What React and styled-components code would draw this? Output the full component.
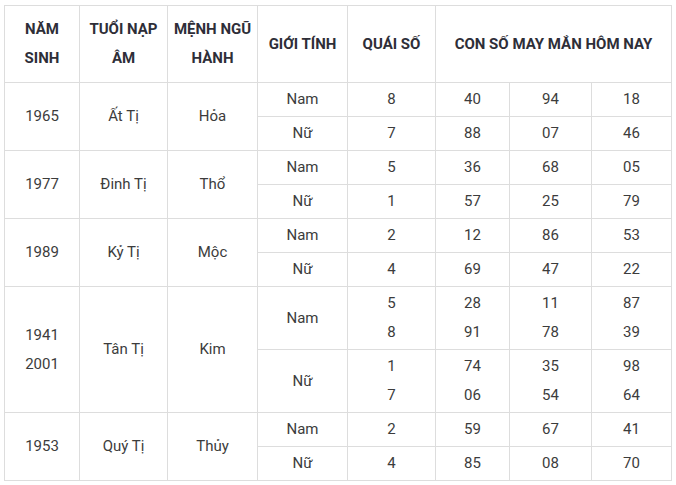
import React from 'react';
import styled, { createGlobalStyle } from 'styled-components';

const GlobalStyle = createGlobalStyle`
  html, body {
    margin: 0;
    padding: 0;
    background: #fff;
  }
  body {
    font-family: Roboto, "Liberation Sans", Arial, sans-serif;
  }
`;

const rows = [
  {
    year: ['1965'], tuoi: 'Ất Tị', menh: 'Hỏa',
    genders: [
      { label: 'Nam', quai: ['8'], nums: [['40'], ['94'], ['18']] },
      { label: 'Nữ', quai: ['7'], nums: [['88'], ['07'], ['46']] },
    ],
  },
  {
    year: ['1977'], tuoi: 'Đinh Tị', menh: 'Thổ',
    genders: [
      { label: 'Nam', quai: ['5'], nums: [['36'], ['68'], ['05']] },
      { label: 'Nữ', quai: ['1'], nums: [['57'], ['25'], ['79']] },
    ],
  },
  {
    year: ['1989'], tuoi: 'Kỷ Tị', menh: 'Mộc',
    genders: [
      { label: 'Nam', quai: ['2'], nums: [['12'], ['86'], ['53']] },
      { label: 'Nữ', quai: ['4'], nums: [['69'], ['47'], ['22']] },
    ],
  },
  {
    year: ['1941', '2001'], tuoi: 'Tân Tị', menh: 'Kim',
    genders: [
      { label: 'Nam', quai: ['5', '8'], nums: [['28', '91'], ['11', '78'], ['87', '39']] },
      { label: 'Nữ', quai: ['1', '7'], nums: [['74', '06'], ['35', '54'], ['98', '64']] },
    ],
  },
  {
    year: ['1953'], tuoi: 'Quý Tị', menh: 'Thủy',
    genders: [
      { label: 'Nam', quai: ['2'], nums: [['59'], ['67'], ['41']] },
      { label: 'Nữ', quai: ['4'], nums: [['85'], ['08'], ['70']] },
    ],
  },
];

const colWidths = [75, 88, 90, 90, 88, 74, 82, 80];

function Lines({ items }) {
  return items.map((t, i) => (
    <React.Fragment key={i}>
      {i > 0 && <br />}
      {t}
    </React.Fragment>
  ));
}

export default function App() {
  return (
    <>
      <GlobalStyle />
      <Wrap>
        <Table>
          <colgroup>
            {colWidths.map((w, i) => (
              <col key={i} style={{ width: w }} />
            ))}
          </colgroup>
          <thead>
            <tr>
              <Head>NĂM<br />SINH</Head>
              <Head>TUỔI NẠP<br />ÂM</Head>
              <Head>MỆNH NGŨ<br />HÀNH</Head>
              <Head>GIỚI TÍNH</Head>
              <Head>QUÁI SỐ</Head>
              <Head colSpan={3}>CON SỐ MAY MẮN HÔM NAY</Head>
            </tr>
          </thead>
          <tbody>
            {rows.map((r) =>
              r.genders.map((g, gi) => (
                <tr key={r.tuoi + g.label}>
                  {gi === 0 && (
                    <>
                      <Cell rowSpan={2}><Lines items={r.year} /></Cell>
                      <Cell rowSpan={2}>{r.tuoi}</Cell>
                      <Cell rowSpan={2}>{r.menh}</Cell>
                    </>
                  )}
                  <Cell>{g.label}</Cell>
                  <Cell><Lines items={g.quai} /></Cell>
                  {g.nums.map((n, ni) => (
                    <Cell key={ni}><Lines items={n} /></Cell>
                  ))}
                </tr>
              ))
            )}
          </tbody>
        </Table>
      </Wrap>
    </>
  );
}

const Wrap = styled.div`
  padding: 5px 0 0 4px;
`;

const Table = styled.table`
  border-collapse: collapse;
  table-layout: fixed;
  width: 667px;
  font-size: 15px;
`;

const Head = styled.th`
  border: 1px solid #dddddd;
  padding: 9px 4px;
  line-height: 29px;
  height: 58px;
  font-weight: 700;
  color: #2e2e38;
  text-align: center;
  vertical-align: middle;
`;

const Cell = styled.td`
  border: 1px solid #dddddd;
  padding: 2px 4px;
  line-height: 29px;
  font-weight: 400;
  color: #3c3c3c;
  text-align: center;
  vertical-align: middle;
`;
